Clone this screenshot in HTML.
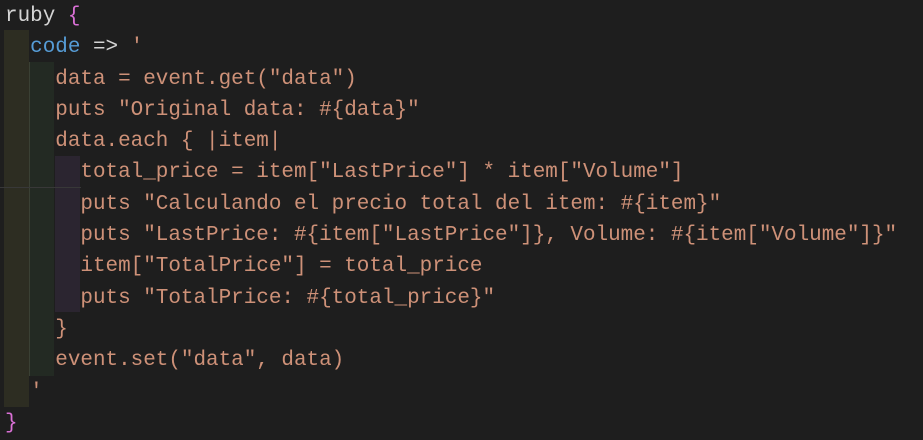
<!DOCTYPE html>
<html><head><meta charset="utf-8"><style>
html,body{margin:0;padding:0;background:#1e1e1e;width:923px;height:440px;overflow:hidden;position:relative}
.b{position:absolute}
pre{position:absolute;left:5px;top:1px;margin:0;font-family:"Liberation Mono",monospace;font-size:20.95px;line-height:31.3px;color:#ce9178;white-space:pre}
.w{color:#d4d4d4}.k{color:#569cd6}.p{color:#da70d6}
</style></head><body>
<div class="b" style="left:4px;top:30px;width:25px;height:377px;background:#2d2d22"></div>
<div class="b" style="left:29px;top:62px;width:1px;height:314px;background:#3a4034"></div>
<div class="b" style="left:30px;top:62px;width:24px;height:314px;background:#232a23"></div>
<div class="b" style="left:55px;top:156px;width:25px;height:156px;background:#2b2530"></div>
<div class="b" style="left:0;top:187px;width:81px;height:1px;background:#383838"></div>
<pre><span class="w">ruby </span><span class="p">{</span>
  <span class="k">code</span><span class="w"> =&gt; </span>'
    data = event.get("data")
    puts "Original data: #{data}"
    data.each { |item|
      total_price = item["LastPrice"] * item["Volume"]
      puts "Calculando el precio total del item: #{item}"
      puts "LastPrice: #{item["LastPrice"]}, Volume: #{item["Volume"]}"
      item["TotalPrice"] = total_price
      puts "TotalPrice: #{total_price}"
    }
    event.set("data", data)
  '
<span class="p">}</span></pre>
</body></html>
